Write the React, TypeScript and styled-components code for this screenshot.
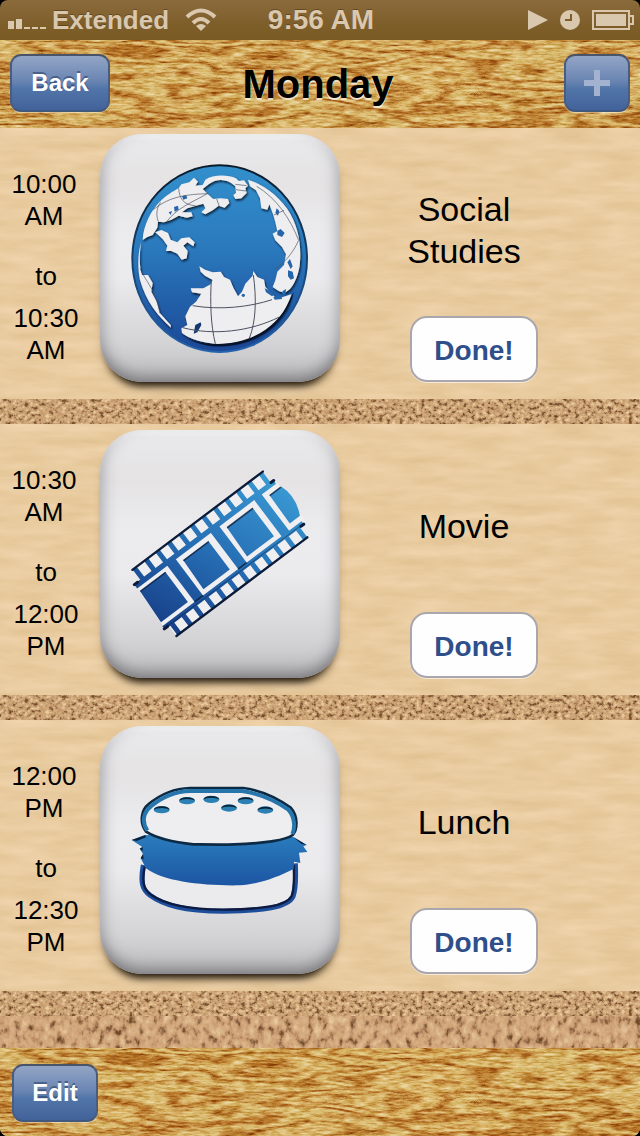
import React from 'react';
import styled, { createGlobalStyle } from 'styled-components';

const GlobalStyle = createGlobalStyle`
  * { box-sizing: border-box; }
  body { margin: 0; background: #000; }
  button { font-family: inherit; cursor: pointer; }
`;

const sans = '"Liberation Sans", Arial, Helvetica, sans-serif';

const Screen = styled.div`
  min-height: 100vh;
  display: flex;
  flex-direction: column;
  overflow: hidden;
  border-radius: 8px;
  font-family: ${sans};
  color: #000;
`;

const Defs = styled.svg`
  position: absolute;
  width: 0;
  height: 0;
`;

const TextureLayer = styled.svg`
  position: absolute;
  inset: 0;
  width: 100%;
  height: 100%;
  z-index: -1;
`;

const StatusBar = styled.header`
  height: 40px;
  padding: 0 6px 0 8px;
  display: grid;
  grid-template-columns: 1fr auto 1fr;
  align-items: center;
  color: #d9c7ae;
  font-weight: bold;
  background: linear-gradient(#8b6b3c, #7e5f2b 60%, #795a22);
  text-shadow: 0 -1px 0 rgba(70, 45, 10, 0.5);
`;

const Carrier = styled.div`
  display: flex;
  align-items: center;
  gap: 6px;
  font-size: 26px;
  line-height: 32px;
`;

const Wifi = styled.svg`
  margin-left: 10px;
`;

const Clock = styled.time`
  font-size: 28px;
  line-height: 32px;
`;

const StatusIcons = styled.div`
  display: flex;
  justify-content: flex-end;
  align-items: center;
  gap: 12px;
`;

const Bar = styled.div`
  position: relative;
  isolation: isolate;
  height: 88px;
  padding: 0 10px 2px;
  display: grid;
  grid-template-columns: 1fr auto 1fr;
  align-items: center;
  background: #cfa858;
`;

const Toolbar = styled(Bar)`
  padding: 2px 12px 0;
`;

const BarTitle = styled.h1`
  margin: 0;
  padding: 2px 4px 0 0;
  font-size: 40px;
  line-height: 48px;
  text-shadow: 0 2px 0 rgba(255, 255, 255, 0.7);
`;

const BarButton = styled.button<{ $width: number; $end?: boolean; $faded?: boolean }>`
  width: ${(p) => p.$width}px;
  height: 58px;
  padding: 0;
  display: flex;
  align-items: center;
  justify-content: center;
  justify-self: ${(p) => (p.$end ? 'end' : 'start')};
  border: 2px solid;
  border-color: #4a5468 #4a5d80 #42597f;
  border-radius: 11px;
  background: linear-gradient(#93a5c6, #6b86b3 45%, #5275a9 60%, #42639a);
  box-shadow: 0 1px 0 rgba(255, 255, 255, 0.4);
  color: ${(p) => (p.$faded ? '#a3b2cf' : '#fff')};
  font-size: 24px;
  line-height: 28px;
  font-weight: bold;
  text-shadow: 0 -2px 0 rgba(30, 50, 90, 0.5);
`;

const Schedule = styled.ol`
  flex: 1;
  margin: 0;
  padding: 0;
  list-style: none;
  display: flex;
  flex-direction: column;
  background: #c39a70;
`;

const Row = styled.li`
  position: relative;
  isolation: isolate;
  height: 271px;
  display: flex;
  gap: 8px;
  background: #e8ca9c;
`;

const Cork = styled.li<{ $grow?: boolean }>`
  position: relative;
  isolation: isolate;
  height: 25px;
  flex: ${(p) => (p.$grow ? '1 0 32px' : '0 0 25px')};
`;

const Times = styled.div`
  width: 92px;
  padding-top: 40px;
  display: flex;
  flex-direction: column;
  text-align: center;
  font-size: 26px;
  line-height: 32px;
`;

const StartTime = styled.time`
  padding: 0 12px 0 8px;
`;

const EndTime = styled.time`
  padding: 0 8px;
`;

const Until = styled.span`
  margin: 28px 0 10px;
`;

const Tile = styled.div`
  width: 240px;
  height: 248px;
  margin-top: 6px;
  border-radius: 42px;
  background: linear-gradient(#e9e9eb, #e5e3e4 20%, #ececee 42%, #ebebed 58%, #d3d2d4 85%, #bdbcbe);
  box-shadow:
    inset 0 -14px 16px -8px rgba(70, 70, 74, 0.5),
    inset 12px 0 16px -10px rgba(90, 90, 100, 0.4),
    inset -12px 0 16px -10px rgba(90, 90, 100, 0.4),
    inset 0 5px 6px -2px rgba(255, 255, 255, 0.8),
    0 12px 8px -9px rgba(20, 14, 6, 1),
    0 8px 10px -4px rgba(60, 42, 20, 0.5);
`;

const Picture = styled.svg`
  display: block;
  width: 100%;
  height: 100%;
`;

const Details = styled.div`
  flex: 1;
  max-width: 232px;
  display: flex;
  flex-direction: column;
  align-items: center;
`;

const Subject = styled.h2`
  height: 188px;
  margin: 0;
  padding: 16px 40px 0;
  display: flex;
  align-items: center;
  text-align: center;
  font-size: 34px;
  line-height: 42px;
  font-weight: normal;
`;

const DoneButton = styled.button`
  width: 128px;
  height: 66px;
  padding: 4px 0 0;
  margin-left: 20px;
  border: 2px solid #a9a7ad;
  border-radius: 17px;
  background: #fefefe;
  box-shadow: 0 1px 0 rgba(255, 255, 255, 0.6);
  color: #2f4f8a;
  font-size: 28px;
  line-height: 32px;
  font-weight: bold;
`;

const Texture = ({ kind }: { kind: 'wood' | 'paper' | 'cork' | 'corkLarge' }) => (
  <TextureLayer aria-hidden="true">
    <rect width="100%" height="100%" filter={`url(#${kind})`} />
  </TextureLayer>
);

const SharedDefs = () => (
  <Defs aria-hidden="true">
    <defs>
      <filter id="wood" x="0" y="0" width="100%" height="100%" colorInterpolationFilters="sRGB">
        <feTurbulence type="fractalNoise" baseFrequency="0.006 0.03" numOctaves="3" seed="8" />
        <feColorMatrix values="2 0 0 0 -.5  2 0 0 0 -.5  2 0 0 0 -.5  0 0 0 0 1" />
        <feComponentTransfer result="rings">
          <feFuncR type="table" tableValues=".85 .86 .74 .85 .87 .85 .72 .78 .87 .85 .84 .7 .8 .87 .85 .72" />
          <feFuncG type="table" tableValues=".7 .73 .5 .69 .75 .7 .46 .57 .75 .73 .68 .45 .6 .75 .7 .47" />
          <feFuncB type="table" tableValues=".4 .43 .19 .38 .46 .4 .15 .26 .46 .43 .37 .14 .28 .46 .4 .16" />
        </feComponentTransfer>
        <feTurbulence type="fractalNoise" baseFrequency="0.09 0.5" numOctaves="3" seed="3" />
        <feColorMatrix values="1.5 0 0 0 -.28  1.5 0 0 0 -.28  1.5 0 0 0 -.28  0 0 0 0 1" result="grain" />
        <feBlend in="grain" in2="rings" mode="soft-light" />
      </filter>
      <filter id="paper" x="0" y="0" width="100%" height="100%" colorInterpolationFilters="sRGB">
        <feTurbulence type="fractalNoise" baseFrequency="0.02 0.09" numOctaves="4" seed="5" />
        <feColorMatrix values=".08 0 0 0 .872  .09 0 0 0 .752  .13 0 0 0 .56  0 0 0 0 1" />
      </filter>
      <filter id="cork" x="0" y="0" width="100%" height="100%" colorInterpolationFilters="sRGB">
        <feTurbulence type="fractalNoise" baseFrequency="0.24 0.26" numOctaves="3" seed="11" />
        <feColorMatrix values="1 0 0 0 0  1 0 0 0 0  1 0 0 0 0  0 0 0 0 1" />
        <feComponentTransfer>
          <feFuncR type="table" tableValues=".4 .42 .45 .55 .74 .8 .83 .88 .92 .92 .92" />
          <feFuncG type="table" tableValues=".25 .27 .3 .4 .57 .64 .68 .75 .8 .8 .8" />
          <feFuncB type="table" tableValues=".14 .15 .17 .26 .4 .46 .5 .58 .63 .63 .63" />
        </feComponentTransfer>
      </filter>
      <filter id="corkLarge" x="0" y="0" width="100%" height="100%" colorInterpolationFilters="sRGB">
        <feTurbulence type="fractalNoise" baseFrequency="0.14 0.1" numOctaves="4" seed="14" />
        <feColorMatrix values="1 0 0 0 0  1 0 0 0 0  1 0 0 0 0  0 0 0 0 1" />
        <feComponentTransfer>
          <feFuncR type="table" tableValues=".4 .42 .45 .62 .77 .82 .84 .86 .9 .92 .92" />
          <feFuncG type="table" tableValues=".25 .27 .3 .46 .59 .65 .68 .72 .77 .8 .8" />
          <feFuncB type="table" tableValues=".14 .15 .17 .32 .43 .48 .51 .55 .6 .62 .62" />
        </feComponentTransfer>
      </filter>
      <filter id="pressed" x="-5%" y="-5%" width="110%" height="110%">
        <feDropShadow dx="3" dy="5" stdDeviation="3" floodColor="#04101f" floodOpacity="0.9" />
      </filter>
      <linearGradient id="blue" x1="0" y1="0" x2="0" y2="1">
        <stop offset="0" stopColor="#3390cc" />
        <stop offset=".45" stopColor="#2a79bd" />
        <stop offset="1" stopColor="#1b4796" />
      </linearGradient>
      <linearGradient id="patty" x1="0" y1="0" x2="0" y2="1">
        <stop offset="0" stopColor="#2a7dbd" />
        <stop offset="1" stopColor="#1c55a3" />
      </linearGradient>
      <linearGradient id="rim" x1="0" y1="0" x2="0" y2="1">
        <stop offset="0" stopColor="#0b1a28" />
        <stop offset=".5" stopColor="#14406e" />
        <stop offset="1" stopColor="#2463ac" />
      </linearGradient>
      <linearGradient id="film" gradientUnits="userSpaceOnUse" x1="-20" y1="240" x2="500" y2="0">
        <stop offset="0" stopColor="#163e87" />
        <stop offset=".5" stopColor="#276fb5" />
        <stop offset="1" stopColor="#3a9bd4" />
      </linearGradient>
    </defs>
  </Defs>
);

const Globe = () => (
  <Picture viewBox="30 27 720 744" role="img" aria-label="Globe">
    <ellipse cx="389" cy="401" rx="262" ry="280" fill="url(#blue)" stroke="url(#rim)" strokeWidth="6" />
    <g fill="#eeeef0" filter="url(#pressed)">
      <path d="M158 345C160 300 185 255 208 232C228 212 250 198 266 190L274 178L298 172L312 158L324 170L316 182L338 180L346 164C370 148 412 148 438 160L446 168L462 166L474 182L466 190L470 204L454 220L436 222L430 210L438 204L436 184C412 160 380 160 356 178L338 192L352 206L370 222L392 220L414 222L418 234L404 248L386 242L368 256L346 268L334 262L346 250L340 236L318 242L292 250L276 262L304 262L308 274L290 278L266 272L244 284L222 292L204 290L202 308L188 330L172 336Z" />
      <path d="M196 322L214 315L234 324L242 344L262 352L274 340L298 337L314 352L310 364L292 352L280 362L293 378L290 400L275 404L262 386L244 378L228 378L232 362L218 342Z" />
      <path d="M153 352L150 380C148 410 150 434 156 450L174 450L188 474L184 500L200 530L210 565L242 600L243 608C205 575 168 530 150 465C142 425 144 385 153 352Z" />
      <path d="M328 424L345 434L368 442L392 440L402 456L420 464L430 488L444 514L456 500L466 476L488 452L490 438L502 456L522 464L526 486L544 504L560 522L604 508L592 545C560 606 490 656 385 657C340 655 300 642 276 624L274 610L292 600L286 574L300 545L318 530L334 506L306 502L302 490L340 490L362 478L368 465L345 452L332 440Z" />
      <path d="M474 164C520 178 562 210 592 252C622 298 634 350 630 410C628 440 618 470 600 492L584 504L566 498L548 486L556 466L562 440L582 420L588 388L576 366L556 346L548 326L562 318L556 292L550 270L538 238L532 254L514 250L510 220L498 196L480 184Z" />
    </g>
    <g fill="#2565ab">
      <path d="M562 318l10 -6 12 12 -8 12 -14 -6zM592 412l8 -10 8 22 -6 8zM594 436l14 4 4 20 -10 4 -8 -10zM524 490l14 6 14 14 -6 4 -18 -12zM550 516l24 -6 2 12 -22 2zM578 498l10 -6 -2 20 -10 -4zM276 214l12 -4 4 10 -12 4zM252 246l12 -4 2 12 -12 6zM236 262l10 -4 -4 12zM560 250l8 8 -4 14 -8 -8z" />
      <path d="M316 600L332 592L334 600L322 622L311 626Z" fill="#15376f" />
      <ellipse cx="460" cy="511" rx="5" ry="5" />
    </g>
    <g fill="none" stroke="#4d5160" strokeWidth="3">
      <path d="M364 464C360 530 362 600 376 656M490 450C500 520 498 590 478 640M308 542C390 556 480 546 546 524M278 608C370 632 480 620 568 576" />
      <path d="M190 254C230 222 270 208 354 206M205 290C196 266 202 244 212 232M266 190C268 220 280 240 316 242M352 206C300 235 260 250 230 290M380 222L388 244M436 178L470 182M438 194L468 198M500 184C560 220 600 280 626 346M626 346C606 390 580 415 556 432M552 270L582 256M150 430C170 475 195 490 210 565" strokeWidth="2" />
    </g>
    <path d="M612 500C590 590 510 664 385 664C340 664 300 648 270 626C300 650 340 657 385 657C490 656 566 600 596 530Z" fill="#07142c" />
  </Picture>
);

const perforations = Array.from({ length: 12 }, (_, i) => i * 43);

const Film = () => (
  <Picture viewBox="30 30 720 744" role="img" aria-label="Film strip">
    <g transform="translate(125 450) rotate(-37)" fill="url(#film)">
      <path d="M0 0H490V40H506V200H482V238H-12V200H-26L-18 42L2 40Z" fill="#efeff1" />
      <path d="M93 42H125V200H93ZM257 42H289V200H257ZM420 42H448V200H420Z" />
      <path d="M-20 38H502V54H-20ZM-28 190H495V203H-28Z" />
      {perforations.map((u) => (
        <path key={u} d={`M${u + 3} 2h15v40h-15zM${u - 8} 200h15v38h-15z`} />
      ))}
      <path d="M-18 66H77V178H-24ZM141 70H236V176H137ZM305 70H402V176H301ZM465 70H509Q528 120 501 174H463Z" />
      <g fill="none" stroke="#0a1c3a" strokeLinecap="round" strokeWidth="7">
        <path d="M2 1H492M-12 239H480" />
        <path d="M-20 40H-8M492 42H502M-28 200H-16M484 201H495" strokeWidth="9" />
        <path d="M-18 67H77M141 71H236M305 71H402M465 71H507M93 190H125M257 190H289" strokeWidth="5" strokeLinecap="butt" opacity=".75" />
        <path d="M-14 199H490" strokeWidth="3" opacity=".45" />
      </g>
    </g>
  </Picture>
);

const seeds = [
  [215, 284], [291, 257], [364, 253], [417, 279], [467, 257], [526, 285],
];

const Burger = () => (
  <Picture viewBox="30 33 720 744" role="img" aria-label="Hamburger">
    <path d="M160 450C150 505 158 524 180 541C220 570 280 588 400 589C520 587 592 578 609 545C620 516 617 480 616 445" fill="#ebebed" stroke="#1d4e9b" strokeWidth="15" />
    <path d="M164 455C154 508 164 526 184 540C222 567 288 583 400 584C518 582 588 574 605 543C615 516 612 480 611 450" fill="none" stroke="#0d1b42" strokeWidth="7" />
    <path d="M125 375L165 360L610 366L650 390L640 394L652 411L627 413L631 444L612 440L611 462C560 488 500 509 450 511C340 513 220 500 168 460L152 430L159 417L149 401L157 396Z" fill="url(#patty)" />
    <path d="M125 375L165 361L168 367L140 378ZM610 366L650 390L634 386ZM149 401l9 -5v12zM152 430l7 -13 2 16z" fill="#0c2137" />
    <path d="M168 350C146 320 156 283 175 268C211 238 256 220 300 219H460C512 226 562 249 602 278C626 304 622 345 608 360C592 372 570 375 545 379C460 391 390 389 310 388C250 382 200 370 168 350Z" fill="#eeeef0" stroke="#0d2a44" strokeWidth="8" />
    <path d="M172 347C153 318 162 290 183 274C216 246 260 229 302 228H456C510 236 557 257 595 284C616 308 615 340 607 357" fill="none" stroke="#2675ac" strokeWidth="12" />
    {seeds.map(([x, y]) => (
      <g key={x}>
        <ellipse cx={x} cy={y} rx="24" ry="11" fill="#2d80b4" />
        <path d={`M${x - 23} ${y}a23 10 0 0 1 46 0a25 8 0 0 0 -46 0z`} fill="#0b2233" />
      </g>
    ))}
  </Picture>
);

const lessons = [
  { start: '10:00 AM', end: '10:30 AM', name: 'Social Studies', Icon: Globe },
  { start: '10:30 AM', end: '12:00 PM', name: 'Movie', Icon: Film },
  { start: '12:00 PM', end: '12:30 PM', name: 'Lunch', Icon: Burger },
];

export default function App() {
  return (
    <Screen>
      <GlobalStyle />
      <SharedDefs />
      <StatusBar>
        <Carrier>
          <svg width="38" height="20" viewBox="0 0 38 20" fill="currentColor" aria-hidden="true">
            <path d="M0 11h6v8H0zM8 9h6v10H8zM16 17h6v2h-6zM24 17h6v2h-6zM32 17h6v2h-6z" />
          </svg>
          Extended
          <Wifi width="32" height="24" viewBox="0 0 32 24" aria-label="Wi-Fi">
            <g fill="none" stroke="currentColor" strokeWidth="4">
              <path d="M2 9Q16 -4 30 9M8 15Q16 7 24 15" />
            </g>
            <path d="M11 18Q16 14 21 18L16 23Z" fill="currentColor" />
          </Wifi>
        </Carrier>
        <Clock>9:56 AM</Clock>
        <StatusIcons>
          <svg width="20" height="22" viewBox="0 0 20 22" fill="currentColor" aria-label="Playing">
            <path d="M0 1L20 11L0 21Z" />
          </svg>
          <svg width="20" height="20" viewBox="0 0 20 20" aria-label="Alarm set">
            <circle cx="10" cy="10" r="10" fill="currentColor" />
            <path d="M11 4V10H5" fill="none" stroke="#7e5f2b" strokeWidth="2" />
          </svg>
          <svg width="42" height="20" viewBox="0 0 42 20" aria-label="Battery full">
            <path d="M1 1H37V19H1ZM37 6H41V14H37" fill="none" stroke="currentColor" strokeWidth="2" />
            <path d="M4 4H34V16H4Z" fill="currentColor" />
          </svg>
        </StatusIcons>
      </StatusBar>
      <Bar as="nav">
        <Texture kind="wood" />
        <BarButton $width={100}>Back</BarButton>
        <BarTitle>Monday</BarTitle>
        <BarButton $width={66} $end $faded aria-label="Add">
          <svg width="26" height="28" viewBox="0 0 26 28" fill="currentColor" aria-hidden="true">
            <path d="M10 1h6v10h10v6H16v10h-6V17H0v-6h10z" />
          </svg>
        </BarButton>
      </Bar>
      <Schedule>
        {lessons.map(({ start, end, name, Icon }, i) => (
          <React.Fragment key={name}>
            <Row>
              <Texture kind="paper" />
              <Times>
                <StartTime>{start}</StartTime>
                <Until>to</Until>
                <EndTime>{end}</EndTime>
              </Times>
              <Tile><Icon /></Tile>
              <Details>
                <Subject>{name}</Subject>
                <DoneButton>Done!</DoneButton>
              </Details>
            </Row>
            <Cork aria-hidden="true"><Texture kind="cork" /></Cork>
            {i === lessons.length - 1 && (
              <Cork $grow aria-hidden="true"><Texture kind="corkLarge" /></Cork>
            )}
          </React.Fragment>
        ))}
      </Schedule>
      <Toolbar as="footer">
        <Texture kind="wood" />
        <BarButton $width={86}>Edit</BarButton>
      </Toolbar>
    </Screen>
  );
}
